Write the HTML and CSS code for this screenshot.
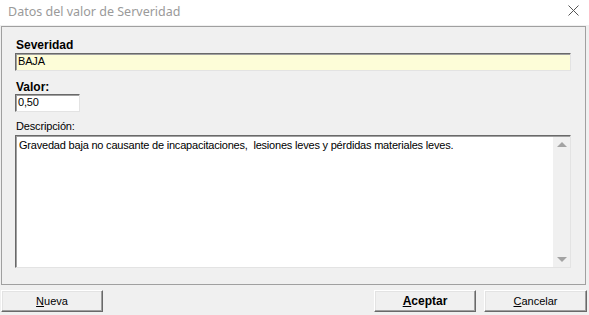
FILE: index.html
```html
<!DOCTYPE html>
<html lang="es">
<head>
<meta charset="UTF-8" />
<title>Datos del valor de Serveridad</title>
<link rel="stylesheet" href="styles.css">
</head>
<body>

<div class="window">
  <div class="titlebar">
    <span class="title">Datos del valor de Serveridad</span>
    <svg class="close" width="11" height="11" viewBox="0 0 11 11">
      <path d="M0.5 0.5 L10.5 10.5 M10.5 0.5 L0.5 10.5" stroke="#555" stroke-width="1" fill="none"/>
    </svg>
  </div>

  <div class="panel">
    <div class="lbl bold">Severidad</div>
    <div class="field field-wide yellow">BAJA</div>

    <div class="lbl bold lbl-valor">Valor:</div>
    <div class="field field-small">0,50</div>

    <div class="lbl lbl-desc">Descripción:</div>
    <div class="memo">
      <div class="memo-text">Gravedad baja no causante de incapacitaciones,&nbsp; lesiones leves y pérdidas materiales leves.</div>
      <div class="scrollbar">
        <span class="arrow up"></span>
        <span class="arrow down"></span>
      </div>
    </div>
  </div>

  <div class="buttons">
    <button class="btn"><u>N</u>ueva</button>
    <div class="spacer"></div>
    <button class="btn bold"><u>A</u>ceptar</button>
    <button class="btn"><u>C</u>ancelar</button>
  </div>
</div>

</body>
</html>
```

FILE: styles.css
```css
body {
  margin: 0;
  background-color: #f0f0f0;
  font-family: 'Liberation Sans', Arial, sans-serif;
  font-size: 11px;
  letter-spacing: -0.15px;
  color: #000;
}
.window {
  width: 589px;
  height: 315px;
  overflow: hidden;
}
.titlebar {
  height: 25px;
  background-color: #fff;
  display: flex;
  align-items: center;
  justify-content: space-between;
  padding: 0 10px 0 8px;
}
.title {
  font-family: 'Noto Sans', 'Open Sans', sans-serif;
  font-size: 12.5px;
  letter-spacing: 0;
  color: #9a9a9a;
  margin-top: -2px;
}
.close {
  margin-top: -4px;
}
.panel {
  margin: 1px 3px 0 1px;
  height: 233px;
  border: 1px solid #a0a0a0;
  padding: 10px 0 14px 13px;
}
.lbl {
  height: 16px;
  line-height: 16px;
  padding-left: 1px;
}
.bold {
  font-weight: bold;
  font-size: 12px;
  letter-spacing: 0;
}
.lbl-valor {
  margin-top: 8px;
  height: 15px;
}
.lbl-desc {
  margin-top: 6px;
  height: 17px;
}
.field {
  box-sizing: border-box;
  height: 18px;
  line-height: 15px;
  padding-left: 2px;
  border-top: 1px solid #696969;
  border-left: 1px solid #696969;
  border-right: 1px solid #e3e3e3;
  border-bottom: 1px solid #e3e3e3;
  box-shadow: inset 1px 1px 0 #a0a0a0;
  background-color: #fff;
}
.field-wide {
  width: 556px;
}
.field-small {
  width: 65px;
}
.yellow {
  background-color: #fdfdd8;
}
.memo {
  box-sizing: border-box;
  width: 556px;
  height: 133px;
  display: flex;
  background-color: #fff;
  border-top: 1px solid #696969;
  border-left: 1px solid #696969;
  border-right: 1px solid #e3e3e3;
  border-bottom: 1px solid #e3e3e3;
  box-shadow: inset 1px 1px 0 #a0a0a0;
}
.memo-text {
  flex: 1;
  padding: 3px 0 0 3px;
  line-height: 13px;
  letter-spacing: -0.2px;
}
.scrollbar {
  width: 17px;
  margin-top: 1px;
  background-color: #f0f0f0;
  display: flex;
  flex-direction: column;
  justify-content: space-between;
  align-items: center;
  padding: 5px 0;
}
.arrow {
  width: 0;
  height: 0;
  border-left: 5px solid transparent;
  border-right: 5px solid transparent;
}
.arrow.up {
  border-bottom: 5px solid #a3a3a3;
}
.arrow.down {
  border-top: 5px solid #a3a3a3;
}
.buttons {
  display: flex;
  gap: 8px;
  margin: 5px 2px 0 1px;
}
.spacer {
  flex: 1;
}
.btn {
  box-sizing: border-box;
  width: 102px;
  height: 22px;
  padding: 0;
  font-family: 'Liberation Sans', Arial, sans-serif;
  font-size: 11px;
  color: #000;
  background-color: #f0f0f0;
  border-top: 1px solid #fff;
  border-left: 1px solid #fff;
  border-right: 1px solid #696969;
  border-bottom: 1px solid #696969;
  box-shadow: inset -1px -1px 0 #a0a0a0, inset 1px 1px 0 #e3e3e3;
}
.btn.bold {
  font-size: 12px;
}
.btn:last-child {
  width: 103px;
}
```
